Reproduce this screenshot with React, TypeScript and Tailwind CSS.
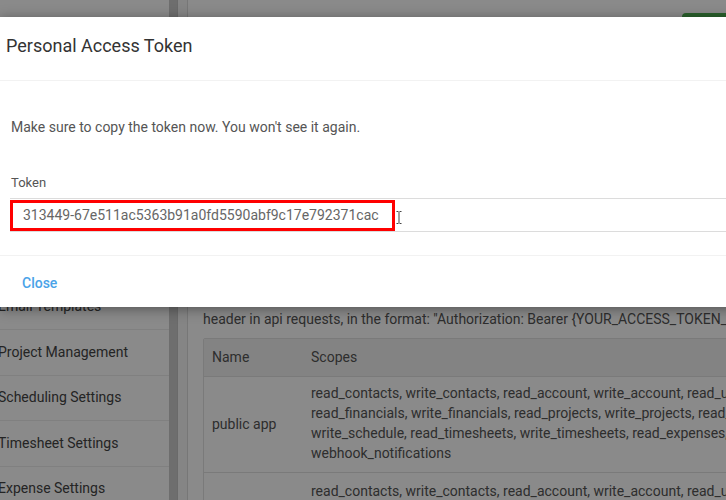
export default function App() {
  const sideItems = [
    'Notifications',
    'Email Templates',
    'Project Management',
    'Scheduling Settings',
    'Timesheet Settings',
    'Expense Settings',
    'Invoice Settings',
  ];
  const scopes = [
    'read_contacts, write_contacts, read_account, write_account, read_users, write_users,',
    'read_financials, write_financials, read_projects, write_projects, read_schedule,',
    'write_schedule, read_timesheets, write_timesheets, read_expenses, write_expenses,',
    'webhook_notifications',
  ];
  return (
    <div className="relative w-[726px] h-[500px] overflow-hidden bg-white font-[Roboto,sans-serif]">
      {/* underlying page */}
      <div className="flex h-full">
        <aside className="w-[169px] shrink-0 flex flex-col pt-[239px] text-[14px] text-[#444]">
          {sideItems.map((l) => (
            <div
              key={l}
              className="h-[45.5px] shrink-0 flex items-center border-b border-[#ececec] whitespace-nowrap"
            >
              <span className="-ml-[2px]">{l}</span>
            </div>
          ))}
        </aside>
        <div className="w-[9px] shrink-0 bg-[#cbcbcb] border-r border-[#c4c4c4]" />
        <div className="w-[10px] shrink-0 bg-[#f6f6f6] border-r border-[#dcdcdc]" />
        <main className="flex-1 min-w-0 pl-[15px] flex flex-col">
          <div className="flex justify-end pt-[13px]">
            <div className="h-[34px] w-[44px] bg-[#4caf50] rounded-tl-[4px]" />
          </div>
          <div className="mt-[242px] text-[14px] leading-[20px] text-[#555] whitespace-nowrap">
            <div>Personal access tokens can be used to access the API. Pass the token in the Authorization</div>
            <div>header in api requests, in the format: "Authorization: Bearer {'{YOUR_ACCESS_TOKEN_HERE}'}"</div>
          </div>
          <div className="mt-[9px] w-[700px] border border-[#e2e2e2] rounded-[2px] text-[14px] text-[#555]">
            <div className="flex h-[38px] items-center bg-[#f3f3f3] border-b border-[#e2e2e2]">
              <div className="w-[95px] pl-[8px]">Name</div>
              <div className="pl-[12px]">Scopes</div>
            </div>
            <div className="flex border-b border-[#e2e2e2]">
              <div className="w-[95px] pl-[8px] flex items-center">public app</div>
              <div className="pl-[12px] pt-[6px] pb-[9px] leading-[20px] whitespace-nowrap">
                {scopes.map((s) => (
                  <div key={s}>{s}</div>
                ))}
              </div>
            </div>
            <div className="flex">
              <div className="w-[95px] pl-[8px] flex items-center">private app</div>
              <div className="pl-[12px] pt-[8px] pb-[9px] leading-[20px] whitespace-nowrap">
                {scopes.map((s) => (
                  <div key={s}>{s}</div>
                ))}
              </div>
            </div>
          </div>
        </main>
      </div>

      {/* dim overlay */}
      <div className="absolute inset-0 bg-black/[0.46]" />

      {/* modal */}
      <div className="absolute left-0 top-[17px] w-[800px] h-[290px] bg-white shadow-[0_2px_12px_rgba(0,0,0,0.4)] flex flex-col">
        <div className="h-[64px] shrink-0 pl-[6px] pt-[17px] border-b border-[#f2f2f2]">
          <h2 className="text-[18px] leading-[24px] text-[#333] font-normal">Personal Access Token</h2>
        </div>
        <div className="px-[11px] pt-[36px] pb-[23px] border-b border-[#f2f2f2]">
          <p className="text-[14px] leading-[20px] text-[#555]">
            Make sure to copy the token now. You won't see it again.
          </p>
          <div className="mt-[37px] text-[13px] leading-[18px] text-[#555]">Token</div>
          <div className="relative mt-[6px] -ml-[1px]">
            <div className="h-[34px] border-y border-[#dcdcdc] flex items-center pl-[13px] text-[14px] text-[#666] whitespace-nowrap">
              313449-67e511ac5363b91a0fd5590abf9c17e792371cac
            </div>
            <div className="absolute left-0 top-[2px] w-[385px] h-[31px] border-[3px] border-[#ff0000]" />
            <svg
              className="absolute left-[386px] top-[13px]"
              width="6"
              height="13"
              viewBox="0 0 6 13"
            >
              <path d="M0.5 0.5h2M3.5 0.5h2M3 1v11M0.5 12.5h2M3.5 12.5h2" stroke="#444" strokeWidth="1" fill="none" />
            </svg>
          </div>
        </div>
        <div className="flex-1 flex items-center pl-[22px] pt-[3px]">
          <span className="text-[14px] font-medium text-[#4aa3e8]">Close</span>
        </div>
      </div>
    </div>
  );
}
